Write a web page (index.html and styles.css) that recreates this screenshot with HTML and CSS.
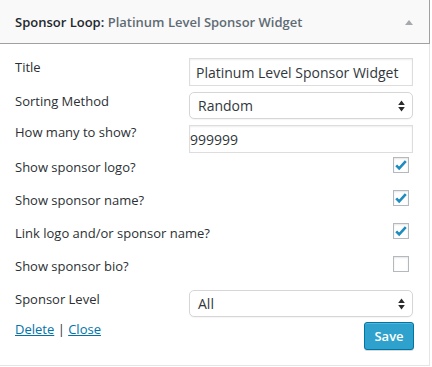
FILE: index.html
```html
<!DOCTYPE html>
<html>
<head>
<meta charset="utf-8">
<link rel="stylesheet" href="styles.css">
</head>
<body>
<div class="widget">
  <div class="widget-top">
    <h3 class="widget-title"><span class="w-name">Sponsor Loop:</span> <span class="in-title">Platinum Level Sponsor Widget</span></h3>
    <span class="toggle"></span>
  </div>
  <div class="widget-inside">
    <div class="row row-title">
      <label class="lbl">Title</label>
      <div class="field text">Platinum Level Sponsor Widget</div>
    </div>
    <div class="row row-sort">
      <label class="lbl">Sorting Method</label>
      <div class="field select">Random<span class="arrows"><svg width="7" height="12" viewBox="0 0 7 12"><path d="M3.5 0.5 L6.8 5 L0.2 5 Z M3.5 11.5 L6.8 7 L0.2 7 Z" fill="#2a2a2a"/></svg></span></div>
    </div>
    <div class="row row-num">
      <label class="lbl">How many to show?</label>
      <div class="field text num">999999</div>
    </div>
    <div class="row row-check">
      <label class="lbl">Show sponsor logo?</label>
      <span class="check on"><svg width="14" height="14" viewBox="0 0 14 14"><path d="M2.2 7.3 L5.2 10.4 L11.8 3.2" fill="none" stroke="#1e8cbe" stroke-width="2.6" stroke-linejoin="miter"/></svg></span>
    </div>
    <div class="row row-check">
      <label class="lbl">Show sponsor name?</label>
      <span class="check on"><svg width="14" height="14" viewBox="0 0 14 14"><path d="M2.2 7.3 L5.2 10.4 L11.8 3.2" fill="none" stroke="#1e8cbe" stroke-width="2.6" stroke-linejoin="miter"/></svg></span>
    </div>
    <div class="row row-check">
      <label class="lbl">Link logo and/or sponsor name?</label>
      <span class="check on"><svg width="14" height="14" viewBox="0 0 14 14"><path d="M2.2 7.3 L5.2 10.4 L11.8 3.2" fill="none" stroke="#1e8cbe" stroke-width="2.6" stroke-linejoin="miter"/></svg></span>
    </div>
    <div class="row row-check last">
      <label class="lbl">Show sponsor bio?</label>
      <span class="check"></span>
    </div>
    <div class="row row-level">
      <label class="lbl">Sponsor Level</label>
      <div class="field select">All<span class="arrows"><svg width="7" height="12" viewBox="0 0 7 12"><path d="M3.5 0.5 L6.8 5 L0.2 5 Z M3.5 11.5 L6.8 7 L0.2 7 Z" fill="#2a2a2a"/></svg></span></div>
    </div>
    <div class="actions">
      <div class="links"><a href="#">Delete</a> | <a href="#">Close</a></div>
      <button class="save">Save</button>
    </div>
  </div>
</div>
</body>
</html>
```

FILE: styles.css
```css
html, body {
  margin: 0;
  padding: 0;
  background: #fff;
}
body {
  font-family: "Open Sans", "Noto Sans", sans-serif;
  font-size: 13px;
  color: #23282d;
}
.widget {
  width: 430px;
  box-sizing: border-box;
}
.widget-top {
  height: 44px;
  box-sizing: border-box;
  background: #f9f9f9;
  border-bottom: 1px solid #a0a0a0;
  border-right: 1px solid #a0a0a0;
  display: flex;
  align-items: center;
  justify-content: space-between;
  padding: 0 16px 0 15px;
}
.widget-title {
  margin: 0;
  font-size: 13px;
  font-weight: 600;
  line-height: 19px;
  color: #23282d;
  padding-top: 1px;
}
.in-title {
  color: #5f6b74;
}
.toggle {
  width: 0;
  height: 0;
  border-left: 4.5px solid transparent;
  border-right: 4.5px solid transparent;
  border-bottom: 5px solid #a6a9ac;
  margin-top: 1px;
}
.widget-inside {
  border-right: 1px solid #e5e5e5;
  border-bottom: 1px solid #e5e5e5;
  padding: 14px 15px 14px 15px;
  height: 322px;
  box-sizing: border-box;
}
.row {
  display: flex;
  align-items: flex-start;
  justify-content: space-between;
}
.lbl {
  line-height: 19px;
  color: #2c3034;
}
.row-title { height: 28px; margin-bottom: 6px; }
.row-title .lbl { margin-top: 0; }
.row-sort { height: 27px; margin-bottom: 6px; }
.row-num { height: 28px; margin-bottom: 4px; }
.row-num .lbl { margin-top: -2px; }
.row-check { height: 33px; }
.row-check .lbl { margin-top: 1px; }
.row-check.last { height: 34px; }
.row-level { height: 27px; margin-bottom: 5px; }
.field {
  width: 224px;
  box-sizing: border-box;
  border: 1px solid #ddd;
  background: #fff;
  color: #32373c;
  font-size: 14px;
  display: flex;
  align-items: center;
  margin-right: 1px;
}
.text {
  height: 28px;
  padding: 0 6px;
  box-shadow: inset 0 1px 2px rgba(0,0,0,0.07);
}
.num {
  padding: 0 0 0 0;
}
.select {
  height: 27px;
  border-radius: 5px;
  border-color: #d6d6d6;
  padding: 0 8px 0 8px;
  justify-content: space-between;
  box-shadow: 0 1px 1px rgba(0,0,0,0.04);
}
.arrows {
  display: flex;
  align-items: center;
  margin-right: -1px;
}
.check {
  width: 16px;
  height: 16px;
  box-sizing: border-box;
  border: 1px solid #b4b9be;
  background: #fff;
  box-shadow: inset 0 1px 2px rgba(0,0,0,0.1);
  margin-right: 5px;
  display: flex;
  align-items: center;
  justify-content: center;
}
.actions {
  display: flex;
  justify-content: space-between;
  align-items: flex-start;
}
.links {
  line-height: 19px;
  margin-top: -2px;
  color: #2c3034;
}
.links a {
  color: #0073aa;
  text-decoration: underline;
}
.save {
  font-family: "Open Sans", "Noto Sans", sans-serif;
  font-size: 13px;
  font-weight: 600;
  color: #fff;
  background: #2ea2cc;
  border: 1px solid #0074a2;
  border-radius: 3px;
  height: 28px;
  width: 50px;
  padding: 0;
  box-shadow: inset 0 1px 0 rgba(120,200,230,0.5), 0 1px 0 rgba(0,0,0,0.15);
  line-height: 26px;
}
```
